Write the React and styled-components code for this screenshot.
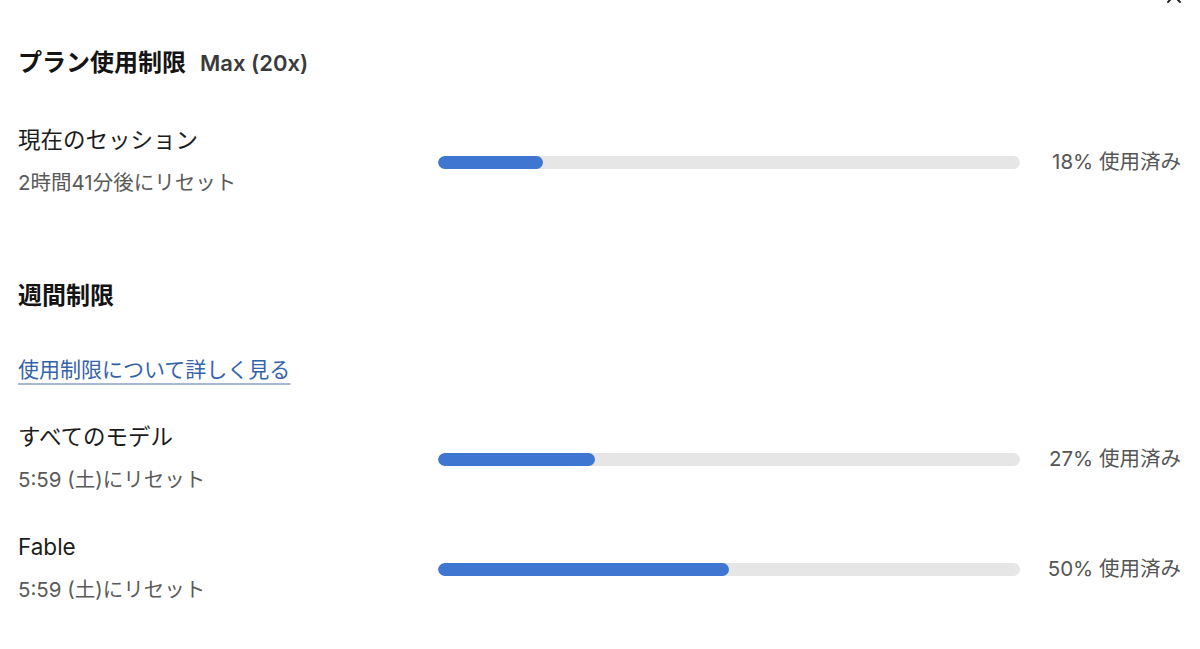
import React from 'react';
import styled, { createGlobalStyle } from 'styled-components';

const GlobalStyle = createGlobalStyle`
  html, body {
    margin: 0;
    padding: 0;
    background: #ffffff;
  }
  body {
    font-family: Inter, "Noto Sans CJK JP", sans-serif;
    -webkit-font-smoothing: antialiased;
  }
`;

// Layout -->

const Page = styled.div`
  position: relative;
  width: 1200px;
  height: 649px;
  overflow: hidden;
  box-sizing: border-box;
  padding: 48px 19px 0 18px;
  background: #ffffff;
`;

const Close = styled.button`
  position: absolute;
  top: -14px;
  right: 16px;
  width: 20px;
  height: 20px;
  padding: 0;
  border: none;
  background: none;
  color: #1a1a1a;
  cursor: pointer;
`;

const Title = styled.h1`
  display: flex;
  align-items: baseline;
  gap: 14px;
  margin: 0;
  font-size: 24px;
  line-height: 30px;
  font-weight: 700;
  color: #141414;
`;

const Plan = styled.span`
  font-size: 22px;
  font-weight: 600;
  color: #3a3a3a;
`;

const Heading = styled.h2`
  margin: ${props => props.$top}px 0 0 0;
  font-size: 24px;
  line-height: 30px;
  font-weight: 700;
  color: #141414;
`;

const Link = styled.a`
  display: inline-block;
  margin-top: 45px;
  font-size: 21px;
  line-height: 28px;
  color: #3563a9;
  text-decoration: underline;
  text-decoration-color: #a6b8d6;
  text-decoration-thickness: 2px;
  text-underline-offset: 6px;
  cursor: pointer;
`;

const Row = styled.div`
  display: grid;
  grid-template-columns: 420px 1fr 161px;
  align-items: center;
  margin-top: ${props => props.$top}px;
`;

const Label = styled.div`
  font-size: 22.5px;
  line-height: 26px;
  color: #1c1c1c;
`;

const Sub = styled.div`
  margin-top: 16px;
  font-size: 20.5px;
  line-height: 28px;
  color: #5a5a5a;
`;

const Track = styled.div`
  height: 13px;
  border-radius: 7px;
  background: #e6e6e6;
  overflow: hidden;
`;

const Fill = styled.div`
  height: 100%;
  border-radius: 7px;
  background: #3f76d1;
`;

const Used = styled.div`
  text-align: right;
  font-size: 20.5px;
  line-height: 28px;
  color: #555555;
  white-space: nowrap;
`;

// Data -->

const rows = [
  { name: '現在のセッション', reset: '2時間41分後にリセット', pct: 18 },
  { name: 'すべてのモデル', reset: '5:59 (土)にリセット', pct: 27 },
  { name: 'Fable', reset: '5:59 (土)にリセット', pct: 50 },
];

const UsageRow = ({ row, top }) => (
  <Row $top={top}>
    <div>
      <Label>{row.name}</Label>
      <Sub>{row.reset}</Sub>
    </div>
    <Track>
      <Fill style={{ width: `${row.pct}%` }} />
    </Track>
    <Used>{row.pct}% 使用済み</Used>
  </Row>
);

const App = () => {
  return (
    <Page>
      <GlobalStyle />
      <Close aria-label="閉じる">
        <svg width="20" height="20" viewBox="0 0 20 20" fill="none" stroke="currentColor" strokeWidth="1.8" strokeLinecap="round">
          <path d="M4 4L16 16M16 4L4 16" />
        </svg>
      </Close>
      <Title>
        <span>プラン使用制限</span>
        <Plan>Max (20x)</Plan>
      </Title>
      <UsageRow row={rows[0]} top={49} />
      <Heading $top={84}>週間制限</Heading>
      <Link>使用制限について詳しく見る</Link>
      <UsageRow row={rows[1]} top={40} />
      <UsageRow row={rows[2]} top={40} />
    </Page>
  );
};

export default App;
